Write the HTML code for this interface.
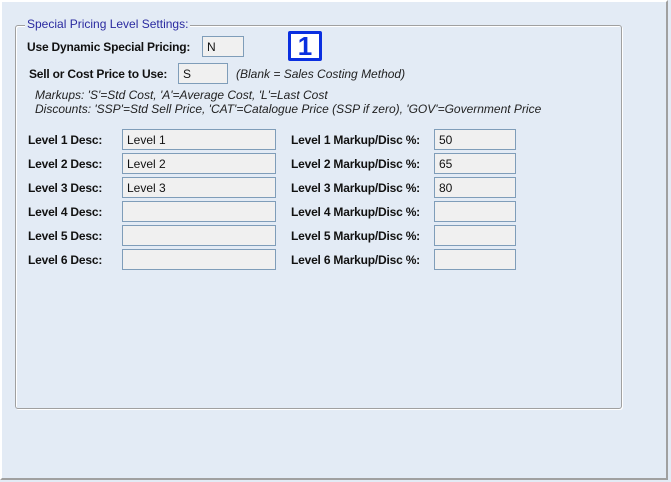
<!DOCTYPE html><html><head><style>
*{margin:0;padding:0;box-sizing:border-box}
body{width:671px;height:482px;background:#e3ebf5;font-family:"Liberation Sans",Arial,sans-serif;font-size:12px;position:relative;overflow:hidden}
.outer{position:absolute;left:0;top:0;width:668px;height:480px;border-top:2px solid #fff;border-left:2px solid #fff;border-right:2px solid #a0a0a0;border-bottom:2px solid #a0a0a0}
.fs{position:absolute;left:15px;top:25px;width:607px;height:384px;border:1px solid #a0a0a0;box-shadow:inset 1px 1px 0 #fff,1px 1px 0 #fff;border-radius:3px}
.leg{position:absolute;left:25px;top:17px;background:#e3ebf5;padding:0 2px;color:#2a2aa0;font-size:12px}
.a{position:absolute;white-space:nowrap}
.b{font-weight:bold;color:#111;letter-spacing:-0.2px}
.i{font-style:italic;color:#222;font-size:12px}
.in{position:absolute;height:21px;background:#f0f0f0;border:1px solid #7f9db9;padding:3px 4px;font-size:12px;color:#111}
.badge{position:absolute;left:288px;top:31px;width:34px;height:30px;border:3px solid #0a2fe0;border-radius:2px;background:#fff;color:#0a2fe0;font-weight:bold;font-size:26px;text-align:center;line-height:24px}
</style></head><body>
<div class="outer"></div>
<div class="fs"></div>
<div class="leg">Special Pricing Level Settings:</div>
<div class="a b" style="left:27px;top:40px">Use Dynamic Special Pricing:</div>
<div class="in" style="left:202px;top:36px;width:42px">N</div>
<div class="badge">1</div>
<div class="a b" style="left:29px;top:67px">Sell or Cost Price to Use:</div>
<div class="in" style="left:178px;top:63px;width:50px">S</div>
<div class="a i" style="left:236px;top:67px">(Blank = Sales Costing Method)</div>
<div class="a i" style="left:35px;top:88px">Markups: 'S'=Std Cost, 'A'=Average Cost, 'L'=Last Cost</div>
<div class="a i" style="left:35px;top:102px">Discounts: 'SSP'=Std Sell Price, 'CAT'=Catalogue Price (SSP if zero), 'GOV'=Government Price</div>

<div class="a b" style="left:28px;top:133px">Level 1 Desc:</div><div class="in" style="left:122px;top:129px;width:154px">Level 1</div>
<div class="a b" style="left:291px;top:133px">Level 1 Markup/Disc %:</div><div class="in" style="left:434px;top:129px;width:82px">50</div>
<div class="a b" style="left:28px;top:157px">Level 2 Desc:</div><div class="in" style="left:122px;top:153px;width:154px">Level 2</div>
<div class="a b" style="left:291px;top:157px">Level 2 Markup/Disc %:</div><div class="in" style="left:434px;top:153px;width:82px">65</div>
<div class="a b" style="left:28px;top:181px">Level 3 Desc:</div><div class="in" style="left:122px;top:177px;width:154px">Level 3</div>
<div class="a b" style="left:291px;top:181px">Level 3 Markup/Disc %:</div><div class="in" style="left:434px;top:177px;width:82px">80</div>
<div class="a b" style="left:28px;top:205px">Level 4 Desc:</div><div class="in" style="left:122px;top:201px;width:154px"></div>
<div class="a b" style="left:291px;top:205px">Level 4 Markup/Disc %:</div><div class="in" style="left:434px;top:201px;width:82px"></div>
<div class="a b" style="left:28px;top:229px">Level 5 Desc:</div><div class="in" style="left:122px;top:225px;width:154px"></div>
<div class="a b" style="left:291px;top:229px">Level 5 Markup/Disc %:</div><div class="in" style="left:434px;top:225px;width:82px"></div>
<div class="a b" style="left:28px;top:253px">Level 6 Desc:</div><div class="in" style="left:122px;top:249px;width:154px"></div>
<div class="a b" style="left:291px;top:253px">Level 6 Markup/Disc %:</div><div class="in" style="left:434px;top:249px;width:82px"></div>
</body></html>
